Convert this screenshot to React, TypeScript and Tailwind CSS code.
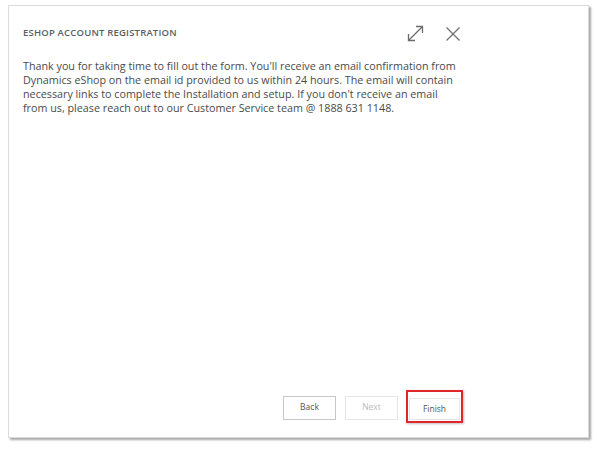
import { memo } from 'react';

function ExpandIcon() {
  return (
    <svg width="19" height="19" viewBox="0 0 19 19" fill="none" stroke="#6b6b6b" strokeWidth="1.3" aria-hidden="true">
      <path d="M2.5 16.5 L16.5 2.5" />
      <path d="M10 2.5 H16.5 V9" />
      <path d="M2.5 10 V16.5 H9" />
    </svg>
  );
}

function CloseIcon() {
  return (
    <svg width="16" height="16" viewBox="0 0 16 16" fill="none" stroke="#707070" strokeWidth="1.3" aria-hidden="true">
      <path d="M1.5 1.5 L14.5 14.5" />
      <path d="M14.5 1.5 L1.5 14.5" />
    </svg>
  );
}

/**
 * RegistrationDone - final step of the eShop account registration wizard
 */
function App() {
  return (
    <div className="w-[597px] h-[449px] bg-white pt-[5px] pl-[8px] font-['Open_Sans','Noto_Sans',sans-serif]">
      <div className="w-[581px] h-[433px] bg-white border border-[#dcdcdc] shadow-[2px_2px_2px_rgba(0,0,0,0.35)] px-[14px]">
        <div className="w-[440px] h-full flex flex-col">
          {/* Header */}
          <div className="flex items-center justify-between pt-[20px]">
            <h1 className="text-[9.5px] font-semibold tracking-[0.02em] text-[#5a5f66] leading-none -mt-[3px]">
              ESHOP ACCOUNT REGISTRATION
            </h1>
            <div className="flex items-center gap-[20px] -mt-[2px] mr-[2px]">
              <ExpandIcon />
              <CloseIcon />
            </div>
          </div>

          <p className="mt-[16px] text-[10.75px] leading-[14px] text-[#4a4a4a] whitespace-nowrap">
            Thank you for taking time to fill out the form. You'll receive an email confirmation from
            <br />
            Dynamics eShop on the email id provided to us within 24 hours. The email will contain
            <br />
            necessary links to complete the Installation and setup. If you don't receive an email
            <br />
            from us, please reach out to our Customer Service team @ 1888 631 1148.
          </p>

          {/* Wizard buttons */}
          <div className="mt-auto mb-[14px] flex items-center justify-end gap-[9px]">
            <button className="w-[53px] h-[24px] mt-[3px] border border-[#c8c8c8] bg-white text-[8.5px] text-[#555]">
              Back
            </button>
            <button disabled className="w-[53px] h-[24px] mt-[3px] border border-[#e6e6e6] bg-white text-[8.5px] text-[#bbb]">
              Next
            </button>
            <div className="border-2 border-[#e0262b] pt-[2px] pb-[1px] px-[1px] -ml-[1px] shadow-[1px_1px_2px_rgba(0,0,0,0.25)]">
              <button className="w-[51px] h-[22px] border border-[#e6e6e6] bg-white text-[8.5px] text-[#555]">
                Finish
              </button>
            </div>
          </div>
        </div>
      </div>
    </div>
  );
}

export default memo(App);
